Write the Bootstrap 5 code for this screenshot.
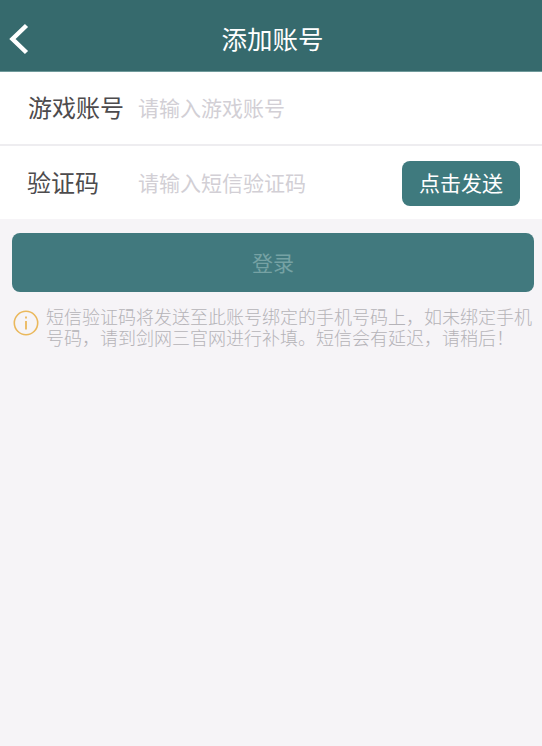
<!DOCTYPE html>
<html lang="zh"><head><meta charset="utf-8">
<link href="https://cdn.jsdelivr.net/npm/bootstrap@5.3.0/dist/css/bootstrap.min.css" rel="stylesheet">
<style>
html,body{height:100%}
body{background:#f6f4f7;font-family:"Noto Sans CJK SC",sans-serif;overflow:hidden}
.topbar{height:72px;background:#366a6d;color:#fff;border-bottom:1px solid #6f9a9b;position:relative}
.topbar h1{font-size:25.5px;font-weight:400;line-height:1;margin:0;padding-top:25px;text-align:center;height:71px;padding-left:3px}
.backic{position:absolute;left:7px;top:22px;width:23px;height:34px}
.formrow{background:#fff}
.row-one{height:74px;border-bottom:2px solid #eeedf0;padding-left:28px;padding-bottom:3px}
.row-two{height:73px;padding-left:27px;padding-right:22px}
.lab{font-size:24px;color:#4d4b4d;line-height:1;white-space:nowrap}
.row-one .lab{width:110px}
.row-two .lab{width:111px;padding-bottom:2px}
.hint{font-size:21px;line-height:1;border:0;background:none;padding:0;outline:0;flex:1;min-width:0;font-family:inherit}
.row-two .hint{margin-bottom:2px}
.hint::placeholder{color:#d2cfd5;opacity:1}
.sendbtn{background:#3f7a7e;color:#fff;font-size:21px;line-height:1;width:118px;height:45px;border-radius:8px;padding:0 0 2px;border:0;margin-top:2px}
.loginbtn{display:block;width:522px;height:59px;margin:14px 0 0 12px;background:#41797e;color:#76a2a4;font-size:21px;border:0;border-radius:8px;padding:0;line-height:1}
.loginbtn:disabled{background:#41797e;color:#76a2a4;opacity:1}
.noticebox{padding:14px 8px 0 13px;gap:7px}
.noticebox svg{width:26px;height:26px;flex:none;margin-top:4px}
.noticetxt{font-size:18px;line-height:21px;color:#b5b3b8;margin:0;width:490px;font-weight:300}
</style></head>
<body>
<header class="topbar">
<svg class="backic" viewBox="0 0 23 34" aria-hidden="true"><path d="M19.500 3.500 5.500 17l14 13.500" fill="none" stroke="#fff" stroke-width="4.500"/></svg>
<h1>添加账号</h1>
</header>
<form>
<div class="formrow row-one d-flex align-items-center"><span class="lab">游戏账号</span><input class="hint" placeholder="请输入游戏账号"></div>
<div class="formrow row-two d-flex align-items-center"><span class="lab">验证码</span><input class="hint" placeholder="请输入短信验证码"><button type="button" class="btn sendbtn">点击发送</button></div>
<button type="button" class="btn loginbtn" disabled>登录</button>
</form>
<div class="noticebox d-flex">
<svg viewBox="0 0 26 26" aria-hidden="true"><circle cx="13" cy="13" r="11.700" fill="none" stroke="#eab85c" stroke-width="1.600"/><path d="M13 6.500v2M13 11v8.500" stroke="#eab85c" stroke-width="1.800" fill="none"/></svg>
<p class="noticetxt">短信验证码将发送至此账号绑定的手机号码上，如未绑定手机号码，请到剑网三官网进行补填。短信会有延迟，请稍后！</p>
</div>
<script src="https://cdn.jsdelivr.net/npm/bootstrap@5.3.0/dist/js/bootstrap.bundle.min.js"></script>
</body></html>
